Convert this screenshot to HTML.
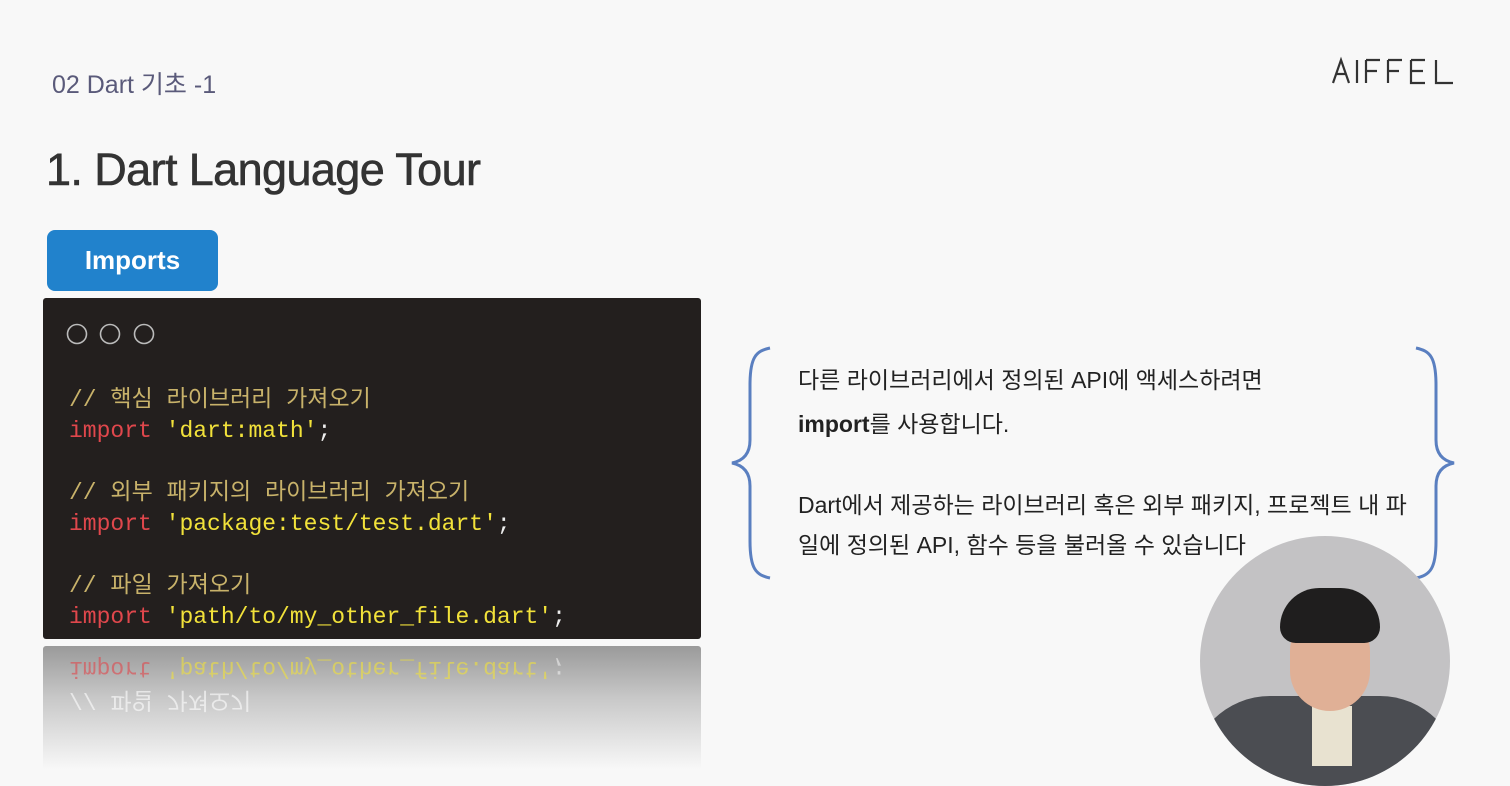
<!DOCTYPE html>
<html><head><meta charset="utf-8"><style>
body{margin:0;width:1510px;height:786px;background:#f8f8f8;overflow:hidden;position:relative;font-family:"Liberation Sans","Noto Sans CJK KR",sans-serif;}
.a{position:absolute}
.code{font-family:"Liberation Mono","Noto Sans CJK KR",monospace;font-size:23px;white-space:pre;line-height:31px}
.c{color:#c8b26a}.k{color:#e0474c}.s{color:#f2e23a}.p{color:#eee}
.t{font-size:23px;color:#222;white-space:nowrap}
</style></head><body>
<div class="a" style="left:52px;top:65px;font-size:25px;color:#5a5a7a">02 Dart 기초 -1</div>
<svg class="a" style="left:1330px;top:56px" width="130" height="30" stroke="#333" stroke-width="2.2" fill="none">
<path d="M3 27 L11 4 L19 27 M7 18 L15 18"/>
<path d="M27 4 L27 27"/>
<path d="M36 4 L50 4 M36 4 L36 27 M36 15 L47 15"/>
<path d="M58 4 L72 4 M58 4 L58 27 M58 15 L69 15"/>
<path d="M81 4 L95 4 M81 4 L81 27 L95 27 M81 15 L93 15"/>
<path d="M106 4 L106 27 L123 27"/>
</svg>
<div class="a" style="left:46px;top:144px;font-size:45px;color:#333;letter-spacing:-0.6px;-webkit-text-stroke:0.6px #333">1. Dart Language Tour</div>
<div class="a" style="left:47px;top:230px;width:171px;height:61px;background:#2182cc;border-radius:8px;color:#fff;font-weight:bold;font-size:26px;line-height:61px;text-align:center">Imports</div>
<div class="a" style="left:43px;top:298px;width:658px;height:341px;background:#231f1e;border-radius:3px"></div>
<svg class="a" style="left:66px;top:323px" width="100" height="24" fill="none" stroke="#bbb" stroke-width="1.6"><circle cx="11" cy="11" r="9.5"/><circle cx="44" cy="11" r="9.5"/><circle cx="78" cy="11" r="9.5"/></svg>
<div class="a code" style="left:69px;top:385px"><span class="c">// 핵심 라이브러리 가져오기</span>
<span class="k">import</span> <span class="s">'dart:math'</span><span class="p">;</span>

<span class="c">// 외부 패키지의 라이브러리 가져오기</span>
<span class="k">import</span> <span class="s">'package:test/test.dart'</span><span class="p">;</span>

<span class="c">// 파일 가져오기</span>
<span class="k">import</span> <span class="s">'path/to/my_other_file.dart'</span><span class="p">;</span></div>
<div class="a" style="left:43px;top:646px;width:658px;height:130px;background:linear-gradient(#9a9a9a,#c8c8c8 40%,#f8f8f8 95%);overflow:hidden;border-radius:3px">
<div class="code" style="position:absolute;left:26px;top:6px;transform:scaleY(-1);opacity:.6"><span class="c" style="color:#fff">// 파일 가져오기</span>
<span class="k">import</span> <span class="s">'path/to/my_other_file.dart'</span><span class="p">;</span></div></div>
<svg class="a" style="left:728px;top:345px" width="735" height="236" fill="none" stroke="#5a7fc0" stroke-width="3">
<path d="M42 3 C28 6 22 12 22 40 L22 95 C22 110 14 116 4 118 C14 120 22 126 22 141 L22 196 C22 224 28 230 42 233"/>
<path d="M688 3 C702 6 708 12 708 40 L708 95 C708 110 716 116 726 118 C716 120 708 126 708 141 L708 196 C708 224 702 230 688 233"/>
</svg>
<div class="a t" style="left:798px;top:361px">다른 라이브러리에서 정의된 API에 액세스하려면</div>
<div class="a t" style="left:798px;top:405px"><b>import</b>를 사용합니다.</div>
<div class="a t" style="left:798px;top:486px">Dart에서 제공하는 라이브러리 혹은 외부 패키지, 프로젝트 내 파</div>
<div class="a t" style="left:798px;top:526px">일에 정의된 API, 함수 등을 불러올 수 있습니다</div>
<div class="a" style="left:1200px;top:536px;width:250px;height:250px;border-radius:50%;background:#c3c2c4;overflow:hidden">
<div class="a" style="left:-10px;top:160px;width:270px;height:120px;background:#4b4d52;border-radius:80px 80px 0 0"></div>
<div class="a" style="left:112px;top:170px;width:40px;height:60px;background:#e8e2d0"></div>
<div class="a" style="left:90px;top:75px;width:80px;height:100px;background:#e0b096;border-radius:40px"></div>
<div class="a" style="left:80px;top:52px;width:100px;height:55px;background:#1f1e1e;border-radius:50px 50px 20px 20px"></div>
</div>
</body></html>
